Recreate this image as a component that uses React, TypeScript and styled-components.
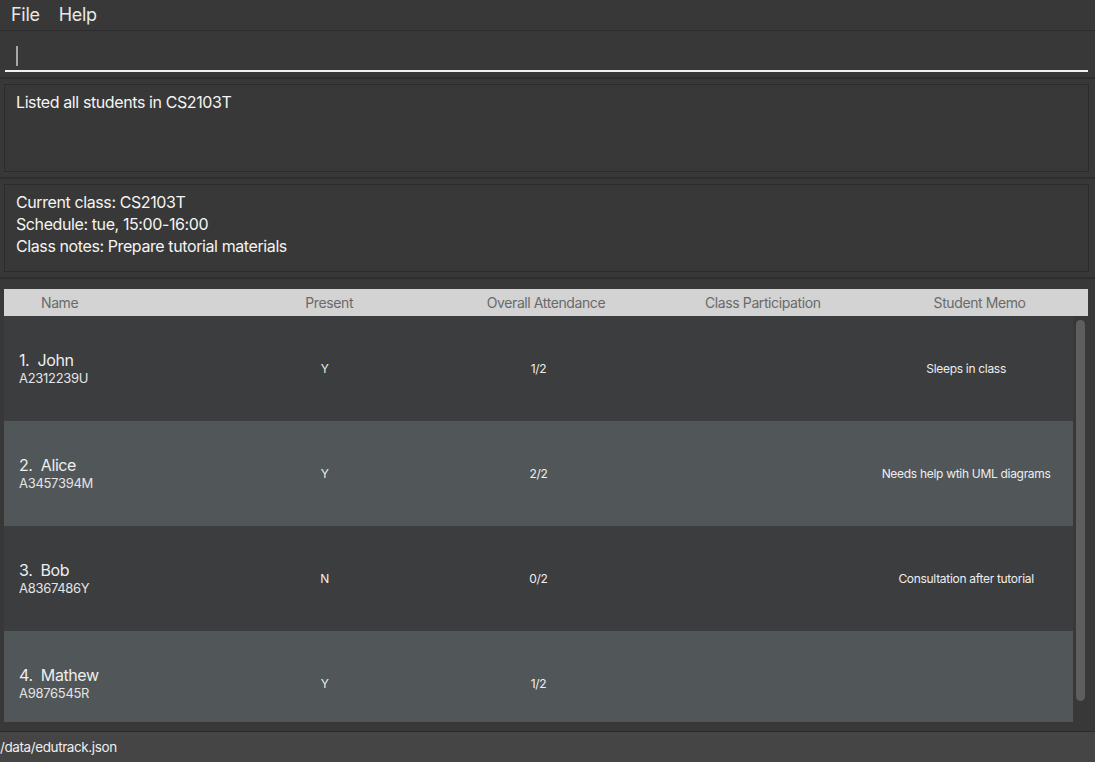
import styled, { createGlobalStyle } from "styled-components"

const GlobalStyle = createGlobalStyle`
    html, body {
        margin: 0;
        padding: 0;
        background-color: #383838;
        font-family: Inter, "Noto Sans", "Liberation Sans", sans-serif;
    }
`

const Window = styled.div`
    display: flex;
    flex-direction: column;
    width: 1095px;
    height: 762px;
    background-color: #383838;
    overflow: hidden;
`

const MenuBar = styled.div`
    flex-shrink: 0;
    display: flex;
    align-items: center;
    height: 30px;
    padding-left: 11px;
    gap: 19px;
    border-bottom: 1px solid #2c2c2c;
    color: #e8e8e8;
    font-size: 18px;
    letter-spacing: -0.3px;
`

const MenuItem = styled.span`
    line-height: 28px;
`

const Section = styled.div<{ $pad: string }>`
    flex-shrink: 0;
    height: 100px;
    padding: ${(p) => p.$pad};
    border-bottom: 2px solid #2e2e2e;
    box-sizing: border-box;
    display: flex;
    flex-direction: column;
`

const CommandSection = styled(Section)`
    height: 48px;
`

const CommandInput = styled.div`
    flex: 1;
    margin-right: 7px;
    border-bottom: 2px solid #f2f2f2;
    display: flex;
    align-items: center;
    padding-left: 11px;
`

const Caret = styled.div`
    width: 2px;
    height: 20px;
    background-color: #a8a8a8;
`

const TextBox = styled.div`
    flex: 1;
    border: 1px solid #2b2b2b;
    padding: 6px 11px;
    color: #f4f4f4;
    font-size: 16px;
    line-height: 22px;
    letter-spacing: -0.4px;
`

const TableArea = styled.div`
    flex: 1;
    min-height: 0;
    padding: 10px 7px 9px 4px;
    display: flex;
    flex-direction: column;
    border-bottom: 1px solid #2a2a2a;
`

const HeaderRow = styled.div`
    flex-shrink: 0;
    display: grid;
    grid-template-columns: repeat(5, 1fr);
    height: 27px;
    background-color: #d3d3d3;
    color: #6a6a6a;
    font-size: 14px;
    letter-spacing: -0.4px;
    align-items: center;
`

const HeaderCell = styled.div<{ $left?: boolean }>`
    text-align: ${(p) => (p.$left ? "left" : "center")};
    padding-left: ${(p) => (p.$left ? "37px" : "0")};
`

const Body = styled.div`
    flex: 1;
    min-height: 0;
    display: flex;
    overflow: hidden;
`

const Rows = styled.div`
    width: 1069px;
    display: flex;
    flex-direction: column;
`

const Row = styled.div<{ $alt: boolean }>`
    flex: 0 0 105px;
    display: grid;
    grid-template-columns: repeat(5, 1fr);
    align-items: center;
    background-color: ${(p) => (p.$alt ? "#515658" : "#3c3d3f")};
    color: #eeeeee;
    font-size: 12px;
    letter-spacing: -0.3px;
`

const NameCell = styled.div`
    padding-left: 15px;
    display: flex;
    flex-direction: column;
`

const StudentName = styled.span`
    font-size: 16px;
    line-height: 19px;
    letter-spacing: -0.4px;
`

const StudentId = styled.span`
    font-size: 13px;
    line-height: 16px;
    color: #e4e4e4;
`

const Cell = styled.div`
    text-align: center;
`

const ScrollTrack = styled.div`
    flex: 1;
    display: flex;
    justify-content: center;
    padding-top: 4px;
`

const ScrollThumb = styled.div`
    width: 9px;
    height: 381px;
    border-radius: 5px;
    background-color: #5e5e5e;
`

const StatusBar = styled.div`
    flex-shrink: 0;
    height: 30px;
    background-color: #454545;
    color: #eeeeee;
    font-size: 13.5px;
    letter-spacing: -0.4px;
    display: flex;
    align-items: center;
`

const students = [
    { name: "John", id: "A2312239U", present: "Y", attendance: "1/2", memo: "Sleeps in class" },
    { name: "Alice", id: "A3457394M", present: "Y", attendance: "2/2", memo: "Needs help wtih UML diagrams" },
    { name: "Bob", id: "A8367486Y", present: "N", attendance: "0/2", memo: "Consultation after tutorial" },
    { name: "Mathew", id: "A9876545R", present: "Y", attendance: "1/2", memo: "" },
]

const App = () => {
    return (
        <Window>
            <GlobalStyle />
            <MenuBar>
                <MenuItem>File</MenuItem>
                <MenuItem>Help</MenuItem>
            </MenuBar>
            <CommandSection $pad="10px 0 5px 5px">
                <CommandInput>
                    <Caret />
                </CommandInput>
            </CommandSection>
            <Section $pad="5px 6px 5px 4px">
                <TextBox>Listed all students in CS2103T</TextBox>
            </Section>
            <Section $pad="5px 6px 5px 4px">
                <TextBox>
                    Current class: CS2103T
                    <br />
                    Schedule: tue, 15:00-16:00
                    <br />
                    Class notes: Prepare tutorial materials
                </TextBox>
            </Section>
            <TableArea>
                <HeaderRow>
                    <HeaderCell $left>Name</HeaderCell>
                    <HeaderCell>Present</HeaderCell>
                    <HeaderCell>Overall Attendance</HeaderCell>
                    <HeaderCell>Class Participation</HeaderCell>
                    <HeaderCell>Student Memo</HeaderCell>
                </HeaderRow>
                <Body>
                    <Rows>
                        {students.map((s, i) => (
                            <Row key={s.id} $alt={i % 2 === 1}>
                                <NameCell>
                                    <StudentName>
                                        {i + 1}.&nbsp; {s.name}
                                    </StudentName>
                                    <StudentId>{s.id}</StudentId>
                                </NameCell>
                                <Cell>{s.present}</Cell>
                                <Cell>{s.attendance}</Cell>
                                <Cell></Cell>
                                <Cell>{s.memo}</Cell>
                            </Row>
                        ))}
                    </Rows>
                    <ScrollTrack>
                        <ScrollThumb />
                    </ScrollTrack>
                </Body>
            </TableArea>
            <StatusBar>/data/edutrack.json</StatusBar>
        </Window>
    )
}

export default App
